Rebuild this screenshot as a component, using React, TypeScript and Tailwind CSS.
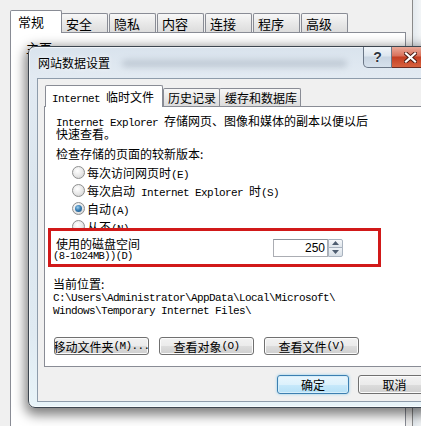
import type { ReactNode } from "react";

const backTabs = ["安全", "隐私", "内容", "连接", "程序", "高级"];

// latin runs use a narrow mono so that one latin char = half a CJK char;
// leading-0 keeps them from stretching the CJK line box
function Lat({ children, className = "" }: { children: ReactNode; className?: string }) {
  return (
    <span className={`font-['Liberation_Mono',monospace] text-[11px] leading-[0px] tracking-[-0.6px] ${className}`}>
      {children}
    </span>
  );
}

function Radio({ checked = false, children }: { checked?: boolean; children: ReactNode }) {
  return (
    <div className="flex h-[18px] items-center pl-[19px] whitespace-nowrap">
      <span className="flex h-[13px] w-[13px] items-center justify-center rounded-full border border-[#8e8f8f] bg-[radial-gradient(circle_at_40%_35%,#ffffff_0%,#e6e6e6_55%,#c9c9c9_100%)]">
        {checked && (
          <span className="h-[7px] w-[7px] rounded-full bg-[radial-gradient(circle_at_40%_35%,#9fd0ee_0%,#3a7fb4_45%,#164a78_100%)]" />
        )}
      </span>
      <span className="ml-[2px]">{children}</span>
    </div>
  );
}

function Btn({
  children,
  isDefault = false,
  className = "",
}: {
  children: ReactNode;
  isDefault?: boolean;
  className?: string;
}) {
  const look = isDefault
    ? "border-[#3c7fb1] bg-[linear-gradient(#eaf6fd_0%,#dcf1fc_50%,#c8e9fb_50%,#b5e0f6_100%)] shadow-[inset_0_0_0_1px_#d6eefa,0_0_3px_#8ccbea]"
    : "border-[#707070] bg-[linear-gradient(#f2f2f2_0%,#ebebeb_50%,#dddddd_50%,#cfcfcf_100%)] shadow-[inset_0_0_0_1px_#fbfbfb]";
  return (
    <div
      className={`flex items-center justify-center overflow-hidden whitespace-nowrap rounded-[3px] border ${look} ${className}`}
    >
      {children}
    </div>
  );
}

export default function App() {
  return (
    <div className="relative h-[426px] w-[421px] overflow-hidden bg-[#f0f0f0] font-['Noto_Sans_CJK_SC','Liberation_Sans',sans-serif] text-[12px] leading-[13px] text-black">
      {/* Back window: Internet options */}
      <div className="flex h-full">
        <div className="flex w-[406px] flex-col pl-[10px] pt-[10px]">
          <div className="flex h-[22px] items-end">
            <div className="relative z-10 -mb-px h-[23px] w-[52px] rounded-t-[2px] border border-b-0 border-[#898c95] bg-white pl-[7px] pt-[3px] text-[13px] leading-[15px]">
              常规
            </div>
            {backTabs.map((t, i) => (
              <div
                key={t}
                className={`h-[19px] w-[47px] rounded-t-[2px] border border-b-0 border-[#898c95] bg-[linear-gradient(#f7f7f7,#e9e9e9_50%,#dcdcdc)] pl-[4px] pt-[2px] text-[13px] leading-[15px] ${
                  i === 0 ? "-ml-px" : "ml-px"
                } ${i === 5 ? "w-[45px]" : ""}`}
              >
                {t}
              </div>
            ))}
          </div>
          <div className="flex-1 border border-b-0 border-[#898c95] bg-white pl-[15px] pt-[7px] text-[13px] leading-[15px]">
            主页
          </div>
        </div>
        <div className="w-[6px] bg-[#f0f0f0]" />
        <div className="w-px bg-[#8a8a8a]" />
        <div className="flex-1 bg-[linear-gradient(90deg,#e3e9ee,#f2f5f7)]" />
      </div>

      {/* Dialog: 网站数据设置 */}
      <div className="absolute left-[28px] top-[46px] flex w-[419px] flex-col rounded-[7px] border border-[#3d4650] bg-[linear-gradient(180deg,#d9e3ed_0%,#e2eaf2_8%,#dbe6ef_40%,#dfeaf2_80%,#e8f4f9_100%)] shadow-[0_4px_12px_3px_rgba(0,0,0,0.5),inset_0_0_0_1px_rgba(255,255,255,0.6)]">
        {/* Title bar */}
        <div className="flex h-[31px] items-start">
          <div className="whitespace-nowrap pl-[9px] pt-[9px] [text-shadow:0_0_5px_#ffffff]">网站数据设置</div>
          <div className="ml-[12px] mt-[13px] h-[7px] w-[225px] rounded-full bg-[#8c99a7] opacity-40 blur-[3px]" />
          <div className="ml-auto mr-[11px] flex">
            <div className="flex h-[21px] w-[29px] items-center justify-center rounded-bl-[5px] border border-t-0 border-[#6b7787] bg-[linear-gradient(#f1f5f9_0%,#dde6ef_45%,#c9d5e2_50%,#d6e1ec_100%)] font-['Liberation_Sans',sans-serif] text-[14px] font-bold text-[#2f3640] [text-shadow:0_0_2px_#ffffff]">
              ?
            </div>
            <div className="flex h-[21px] w-[43px] items-center justify-center rounded-br-[5px] border border-l-0 border-t-0 border-[#6a2a20] bg-[linear-gradient(#eaa998_0%,#d9705a_45%,#c33d21_50%,#d8623f_100%)]">
              <svg width="13" height="11" viewBox="0 0 13 11" className="-ml-[6px]">
                <path d="M2 1.5 L11 9.5 M11 1.5 L2 9.5" stroke="#4a1a12" strokeWidth="4" strokeLinecap="square" />
                <path d="M2 1.5 L11 9.5 M11 1.5 L2 9.5" stroke="#ffffff" strokeWidth="2.2" strokeLinecap="square" />
              </svg>
            </div>
          </div>
        </div>

        {/* Client area */}
        <div className="mx-[8px] mb-[5px] border border-[#8e9cab] bg-[#f0f0f0] px-[6px] pb-[7px] pt-[6px]">
          {/* Tabs */}
          <div className="flex h-[21px] items-end pl-px">
            <div className="relative z-10 -mb-px h-[22px] w-[118px] whitespace-nowrap rounded-t-[2px] border border-b-0 border-[#898c95] bg-white pl-[6px] pt-[4px]">
              <Lat>Internet </Lat>临时文件
            </div>
            <div className="h-[18px] w-[57px] whitespace-nowrap rounded-t-[2px] border border-b-0 border-[#898c95] bg-[linear-gradient(#f7f7f7,#e9e9e9_50%,#dcdcdc)] pl-[4px] pt-[2px]">
              历史记录
            </div>
            <div className="-ml-px h-[18px] w-[82px] whitespace-nowrap rounded-t-[2px] border border-b-0 border-[#898c95] bg-[linear-gradient(#f7f7f7,#e9e9e9_50%,#dcdcdc)] pl-[5px] pt-[2px]">
              缓存和数据库
            </div>
          </div>

          {/* Tab panel */}
          <div className="flex flex-col border border-[#898c95] bg-white pb-[11px] pl-[8px] pt-[7px]">
            <p className="whitespace-nowrap pl-[3px]">
              <Lat>Internet Explorer </Lat>存储网页、图像和媒体的副本以便以后
              <br />
              快速查看。
            </p>
            <p className="mt-[7px] whitespace-nowrap pl-[3px]">检查存储的页面的较新版本:</p>

            <div className="mt-[3px]">
              <Radio>
                每次访问网页时<Lat>(E)</Lat>
              </Radio>
              <Radio>
                每次启动<Lat> Internet Explorer </Lat>时<Lat>(S)</Lat>
              </Radio>
              <Radio checked>
                自动<Lat>(A)</Lat>
              </Radio>
              <Radio>
                从不<Lat>(N)</Lat>
              </Radio>
            </div>

            {/* Highlighted disk space row */}
            <div className="relative -ml-[5px] -mt-[7px] flex h-[39px] w-[333px] border-[3px] border-[#d11919] bg-white">
              <div className="flex flex-col whitespace-nowrap pl-[5px] pt-[6px]">
                <span>使用的磁盘空间</span>
                <span className="-ml-[3px] font-['Liberation_Mono',monospace] text-[10.5px] leading-[13px] tracking-[-0.6px]">
                  (8-1024MB))(D)
                </span>
              </div>
              <div className="ml-auto mr-[35px] flex self-center">
                <div className="h-[18px] w-[55px] border border-[#abadb3] border-t-[#8e939b] bg-white pr-[2px] text-right font-['Liberation_Sans',sans-serif] text-[12px] leading-[16px]">
                  250
                </div>
                <div className="flex h-[18px] w-[15px] flex-col">
                  <div className="flex h-[9px] items-center justify-center rounded-tr-[2px] border border-[#a9b3bf] bg-[linear-gradient(#f7f9fb,#dfe5eb)]">
                    <svg width="7" height="4" viewBox="0 0 7 4">
                      <path d="M0 4 L3.5 0 L7 4 Z" fill="#4e5d70" />
                    </svg>
                  </div>
                  <div className="-mt-px flex h-[10px] items-center justify-center rounded-br-[2px] border border-[#a9b3bf] bg-[linear-gradient(#eef2f6,#d8dfe6)]">
                    <svg width="7" height="4" viewBox="0 0 7 4">
                      <path d="M0 0 L7 0 L3.5 4 Z" fill="#4e5d70" />
                    </svg>
                  </div>
                </div>
              </div>
            </div>

            <p className="mt-[10px] whitespace-nowrap">当前位置:</p>
            <div className="mt-[2px] whitespace-nowrap font-['Liberation_Mono',monospace] text-[11px] leading-[13px] tracking-[-0.6px]">
              <div>C:\Users\Administrator\AppData\Local\Microsoft\</div>
              <div>Windows\Temporary Internet Files\</div>
            </div>

            <div className="ml-px mt-[19px] flex gap-[10px]">
              <Btn className="h-[18px] w-[95px]">
                移动文件夹<Lat>(M)...</Lat>
              </Btn>
              <Btn className="h-[18px] w-[95px]">
                查看对象<Lat>(O)</Lat>
              </Btn>
              <Btn className="h-[18px] w-[95px]">
                查看文件<Lat>(V)</Lat>
              </Btn>
            </div>
          </div>

          {/* Dialog buttons */}
          <div className="mt-[8px] flex justify-end gap-[9px]">
            <Btn isDefault className="h-[19px] w-[72px]">
              确定
            </Btn>
            <Btn className="h-[19px] w-[73px]">取消</Btn>
          </div>
        </div>
      </div>
    </div>
  );
}
